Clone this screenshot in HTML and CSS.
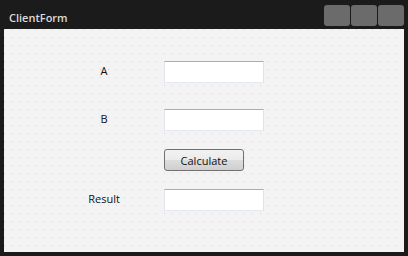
FILE: index.html
```html
<!DOCTYPE html>
<html lang="en">

<head>
    <meta charset="UTF-8">
    <meta name="viewport" content="width=device-width, initial-scale=1.0">
    <title>ClientForm</title>
    <link rel="stylesheet" href="styles.css">
</head>

<body>

    <div class="window">
        <div class="titlebar">
            <div class="title">ClientForm</div>
            <div class="controls">
                <div class="ctl"></div>
                <div class="ctl"></div>
                <div class="ctl"></div>
            </div>
        </div>
        <div class="panel">
            <div class="form">
                <div class="label">A</div>
                <input class="box" type="text">

                <div class="label row2">B</div>
                <input class="box row2" type="text">

                <div class="label row3"></div>
                <button class="calc row3">Calculate</button>

                <div class="label row4">Result</div>
                <input class="box row4" type="text">
            </div>
        </div>
    </div>

</body>

</html>
```

FILE: styles.css
```css
* {
    margin: 0;
    padding: 0;
    box-sizing: border-box;
}

body {
    background-color: #1b1b1b;
    font-family: "Open Sans", "Noto Sans", sans-serif;
    width: 408px;
    height: 256px;
    overflow: hidden;
}

.window {
    width: 408px;
    height: 256px;
}

.titlebar {
    height: 29px;
    display: flex;
    justify-content: space-between;
}

.title {
    color: #dcdcdc;
    font-size: 11px;
    font-weight: 600;
    padding: 10px 0 0 9px;
}

.controls {
    display: flex;
    gap: 1px;
    padding: 5px 4px 0 0;
}

.ctl {
    width: 26px;
    height: 21px;
    background-color: #6b6b6b;
    border-radius: 3px;
}

.panel {
    margin: 0 4px;
    height: 223px;
    background-color: #f3f3f3;
    background-image: radial-gradient(circle at 0.5px 0.5px, #d6d6d6 0.5px, transparent 0.8px);
    background-size: 8px 8px;
}

.form {
    display: grid;
    grid-template-columns: 80px 100px;
    column-gap: 20px;
    padding: 32px 0 0 60px;
}

.label {
    font-size: 11px;
    color: #111;
    text-align: center;
    height: 22px;
    line-height: 20px;
}

.box {
    width: 100px;
    height: 22px;
    background-color: #fff;
    border: 1px solid #e2e3ea;
    border-top-color: #abadb3;
    border-bottom-color: #e3e9ef;
    outline: none;
}

.row2 {
    margin-top: 26px;
}

.row3,
.row4 {
    margin-top: 18px;
}

.calc {
    width: 80px;
    height: 22px;
    border: 1px solid #707070;
    border-radius: 3px;
    background: linear-gradient(#f2f2f2 0%, #ebebeb 50%, #dddddd 50%, #cfcfcf 100%);
    font-family: "Open Sans", "Noto Sans", sans-serif;
    font-size: 11px;
    color: #111;
}
```
